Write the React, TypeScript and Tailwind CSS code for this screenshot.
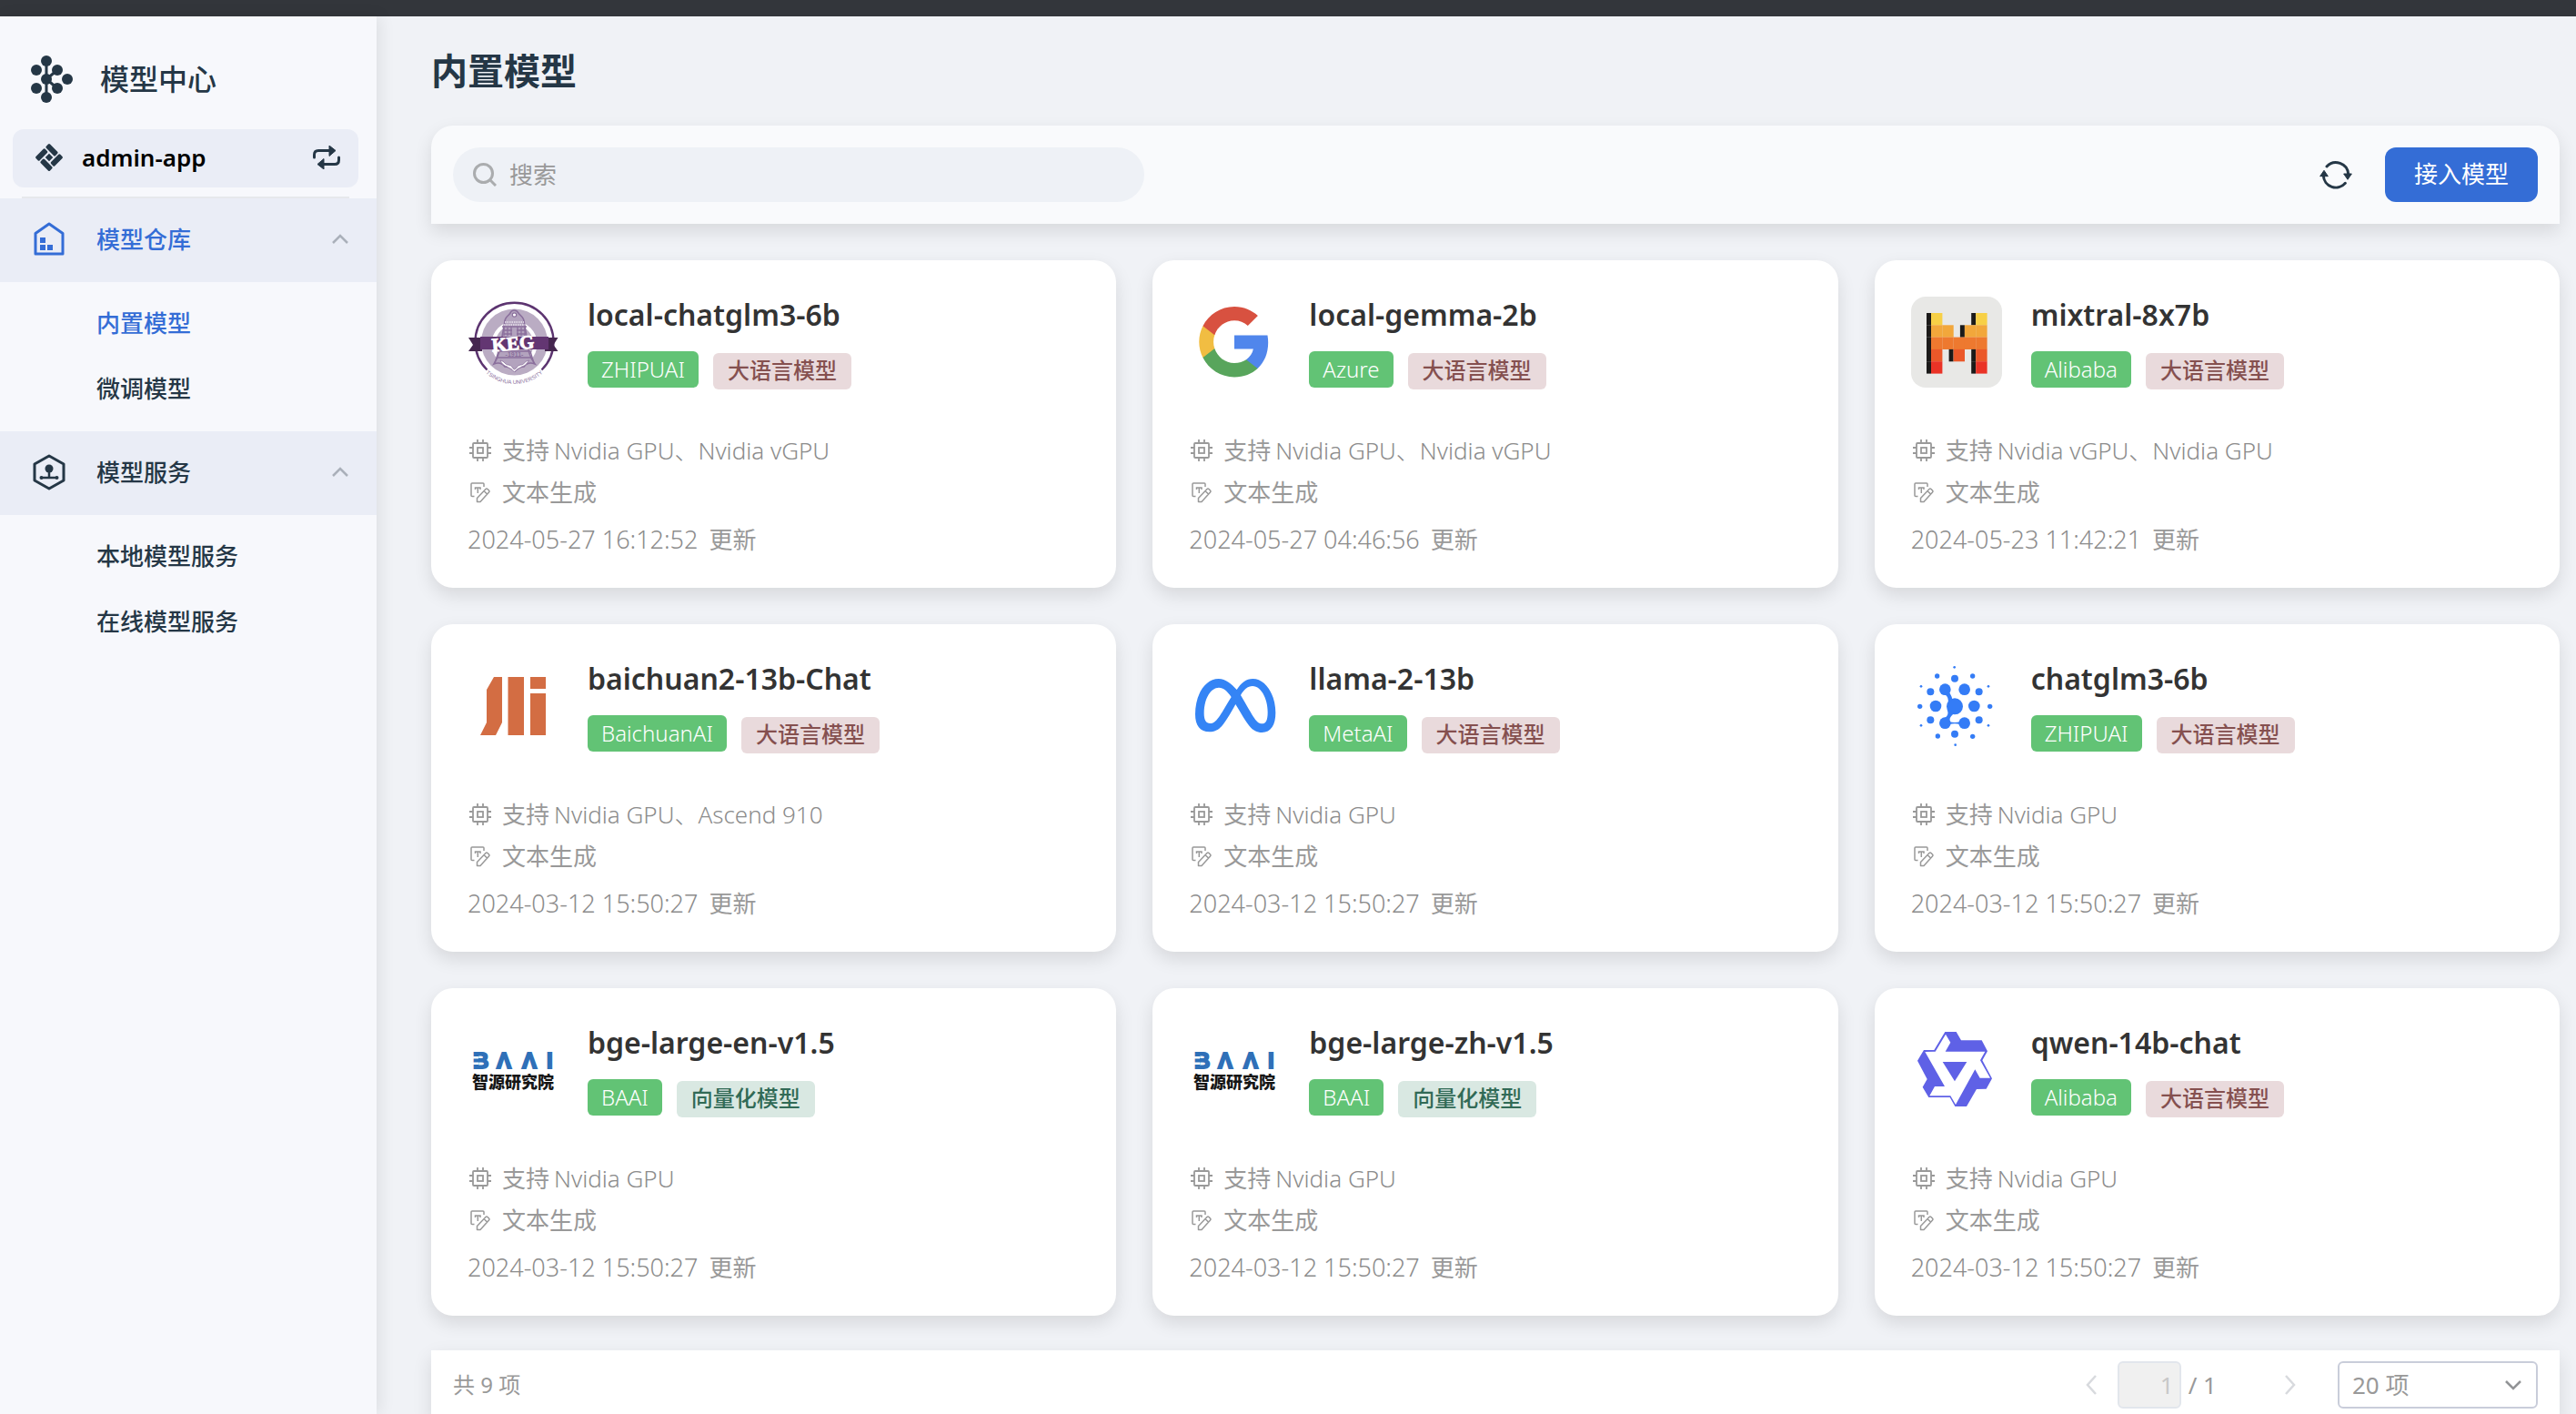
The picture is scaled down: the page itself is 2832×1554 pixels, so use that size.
import React from 'react';

type Kind = 'llm' | 'embedding';

interface Model {
  name: string;
  vendor: string;
  kind: Kind;
  hardware: string;
  updated: string;
  Logo: () => React.ReactElement;
}

/* ---------- brand marks ---------- */

function KegLogo() {
  return (
    <svg viewBox="0 0 100 100" className="size-[100px]" role="img" aria-label="KEG">
      <circle cx="51.5" cy="50" r="36.5" fill="#baacc3" />
      <circle cx="51.5" cy="52" r="23" fill="none" stroke="#fff" strokeWidth="4" />
      <path d="M41 27c0-4 4-6 6-9 1-3 6-5 9 0 2 3 6 5 6 9l3 17c1 14 3 22 9 30-5-2-9-1-12 3-3 0-6 1-10 5-5-4-8-5-11-5-3-4-7-5-12-3 5-8 8-16 9-30z" fill="#b3a3be" stroke="#8a6f9c" strokeWidth="1.6" />
      <circle cx="51.5" cy="20" r="2.2" fill="#fff" stroke="#8a6f9c" strokeWidth="1.2" />
      <path d="M41 28h21M40 31h23" stroke="#eae4ee" strokeWidth="1.4" strokeDasharray="1.5 1" />
      <path d="M40 34v9M44 34v9M48 33v10M40 37h9M40 41h9M54 37h10M54 41h10M55 33v10M59 34v9M63 34v9M38 33h27" stroke="#8a6f9c" strokeWidth="1.3" />
      <path d="M35 60h34M33 67h38M34 60l-4 13M69 60l4 13" stroke="#8a6f9c" strokeWidth="1.3" fill="none" />
      <path d="M36 70c5 1 5 5 9 5s4 4 6.500 5c3-1 3-5 7-5s4-4 9-5c-3 5-5 6-8 7-3 2-5 2-8 6-3-4-5-4-8-6-3-1-6-3-7.500-7z" fill="#fff" stroke="#8a6f9c" strokeWidth="0.800" />
      <text x="51.5" y="66" textAnchor="middle" fontSize="7" fontWeight="700" fontFamily="Liberation Sans" fill="#8a6f9c">-1911-</text>
      <path d="M21.500 80.500a43 43 0 1 1 60 0" fill="none" stroke="#5c3470" strokeWidth="2.400" />
      <path d="M1 45h15v15H1l5-7zM99.500 45H85v15h14.500l-5-7z" fill="#45264f" />
      <path d="M14 44h75v14H14z" fill="#633672" />
      <text x="50" y="58.500" textAnchor="middle" fontSize="21" fontWeight="700" fontFamily="Liberation Serif" fill="#fff" stroke="#fff" strokeWidth="0.900" transform="rotate(-5 50 52)">KEG</text>
      <path id="keg-arc" d="M19 83a47 47 0 0 0 65 0" fill="none" />
      <text fontSize="6" fontFamily="Liberation Sans" fill="#8a6f9c">
        <textPath href="#keg-arc" startOffset="50%" textAnchor="middle">TSINGHUA UNIVERSITY</textPath>
      </text>
    </svg>
  );
}

function GoogleLogo() {
  return (
    <svg viewBox="-2.200 -2.100 28.400 28.400" className="size-[100px]" role="img" aria-label="Google">
      <path fill="#5086ec" d="M22.560 12.250c0-.780-.070-1.530-.200-2.250H12v4.260h5.920c-.260 1.370-1.040 2.530-2.210 3.310v2.770h3.570c2.080-1.920 3.280-4.740 3.280-8.090z" />
      <path fill="#58a55c" d="M12 23c2.970 0 5.460-.980 7.280-2.660l-3.570-2.770c-.980.660-2.230 1.060-3.710 1.060-2.860 0-5.290-1.930-6.160-4.530H2.180v2.840C3.990 20.530 7.700 23 12 23z" />
      <path fill="#f1bd42" d="M5.840 14.090c-.220-.660-.350-1.360-.350-2.090s.130-1.430.350-2.090V7.070H2.180C1.430 8.550 1 10.220 1 12s.430 3.450 1.180 4.930l2.850-2.220.810-.620z" />
      <path fill="#d85140" d="M12 5.380c1.620 0 3.060.560 4.210 1.640l3.150-3.150C17.450 2.090 14.970 1 12 1 7.700 1 3.990 3.470 2.180 7.070l3.660 2.840c.870-2.600 3.300-4.530 6.160-4.530z" />
    </svg>
  );
}

const MISTRAL_ROWS: { color: string; cells: number[]; shade: number[] }[] = [
  { color: '#f7d046', cells: [0, 4], shade: [0, 4] },
  { color: '#f2a73b', cells: [0, 1, 3, 4], shade: [0, 3] },
  { color: '#ee792f', cells: [0, 1, 2, 3, 4], shade: [0] },
  { color: '#eb5829', cells: [0, 2, 4], shade: [0, 2, 4] },
  { color: '#ea3326', cells: [0, 4], shade: [0, 4] },
];

function MistralLogo() {
  return (
    <svg viewBox="0 0 100 100" className="size-[100px]" role="img" aria-label="Mistral">
      <rect width="100" height="100" rx="16" fill="#e8e8e6" />
      {MISTRAL_ROWS.map((row, r) => (
        <g key={row.color}>
          {row.shade.map((c) => (
            <rect key={c} x={17 + c * 12.3} y={18 + r * 13.3} width="5" height="13.400" fill="#1b1a19" />
          ))}
          {row.cells.map((c) => (
            <rect key={c} x={22 + c * 12.3} y={18 + r * 13.3} width="12.400" height="13.400" fill={row.color} />
          ))}
        </g>
      ))}
    </svg>
  );
}

function BaichuanLogo() {
  return (
    <svg viewBox="0 0 100 100" className="size-[100px]" fill="#d36d43" role="img" aria-label="Baichuan">
      <path d="M29 18h9v50l-7 14H14l7-14V32zM44.500 18H62v64H44.500zM69 18h17v13H69zM69 36h17v46H69z" />
    </svg>
  );
}

function MetaLogo() {
  return (
    <svg viewBox="81 78 300 300" className="size-[100px]" fill="#3484f5" role="img" aria-label="Meta">
      <path
        fillRule="evenodd"
        d="M102 255C102 190 135 138 179 138C203 138 222 156 239 174C253 152 270 138 292 138C335 138 367 192 367 250C367 290 352 315 322 315C288 315 276 290 235 222C196 292 182 313 149 313C118 313 102 292 102 255ZM131 252C131 274 138 285 151 285C172 285 182 262 221 198C210 182 198 167 180 167C155 167 131 200 131 252ZM252 192C296 267 304 286 322 286C335 286 341 275 341 248C341 205 320 162 291 162C275 162 262 174 252 192Z"
      />
    </svg>
  );
}

const GLM_DOTS: [number, number, number][] = [
  [177, 229, 27], [145, 173, 19], [209, 173, 19], [114, 228, 19], [241, 228, 19], [145, 284, 19], [209, 284, 19],
  [177, 137, 12], [177, 320, 12], [97, 181, 12], [257, 181, 12], [97, 274, 12], [257, 274, 12],
  [119, 129, 8], [236, 129, 8], [62, 229, 8], [293, 229, 8], [121, 327, 8], [236, 328, 8],
  [176, 100, 4], [66, 163, 4], [288, 163, 4], [66, 292, 4], [288, 292, 4], [179, 356, 4],
];

function GlmLogo() {
  return (
    <svg viewBox="33 78 300 300" className="size-[100px]" fill="#347cf6" role="img" aria-label="ChatGLM">
      {GLM_DOTS.map(([x, y, r]) => (
        <circle key={`${x}-${y}`} cx={x} cy={y} r={r} />
      ))}
      <path d="M140 188Q158 194 155 215L168 208Q170 200 160 184zM152 240Q160 258 142 268L160 274Q162 260 176 252zM160 280Q177 284 194 280V288Q177 284 160 288z" />
    </svg>
  );
}

function BaaiLogo() {
  return (
    <svg viewBox="0 0 100 100" className="size-[100px]" role="img" aria-label="BAAI 智源研究院">
      <text x="6 32 60 87" y="48" fontSize="24" fontWeight="700" fontFamily="Liberation Sans" fill="#2f70b8" stroke="#2f70b8" strokeWidth="2">BΛΛI</text>
      <path d="M5 35h7v2.500H5zM5 41.500h7V44H5z" fill="#fff" />
      <text x="5" y="70" fontSize="18" fontWeight="900" fontFamily="Noto Sans CJK SC" fill="#161616">智源研究院</text>
    </svg>
  );
}

function QwenLogo() {
  return (
    <svg viewBox="33 48 300 300" className="size-[100px]" role="img" aria-label="Qwen">
      <path fill="#5f61e6" d="M145 72h37l16 28h68l19 36-17 30 32 60-19 34-32 1-33 57h-38l-17-30H91l-20-34 15-26-32-61 21-35h34z" />
      <path fill="#fff" d="M147 80l16 27-17 30h131l-16 29 33 58h-34l-16-28-64 116-17-29H94l17-31h33L79 138l34-1z" />
      <path fill="#5f61e6" d="M137 171h80l-40 64z" />
    </svg>
  );
}

/* ---------- interface icons ---------- */

function HubIcon() {
  const nodes: [number, number][] = [[17, 6], [6, 16], [29, 16], [17, 26], [40, 26], [6, 36], [29, 36], [17, 46]];
  return (
    <svg viewBox="0 0 46 52" className="h-[52px] w-[46px]" fill="#253746" aria-hidden="true">
      {nodes.map(([x, y]) => (
        <circle key={`${x}-${y}`} cx={x} cy={y} r="6" />
      ))}
      <path d="M17 6v40M29 16l-12 10 12 10" fill="none" stroke="#253746" strokeWidth="3" />
    </svg>
  );
}

function AppIcon() {
  return (
    <svg viewBox="0 0 32 32" className="size-8" fill="#253746" aria-hidden="true">
      <g transform="rotate(-45 16 16) translate(5 5)">
        <rect x="0" y="0" width="14.500" height="6" rx="1.500" />
        <rect x="16" y="0" width="6" height="14.500" rx="1.500" />
        <rect x="7.500" y="16" width="14.500" height="6" rx="1.500" />
        <rect x="0" y="7.500" width="6" height="14.500" rx="1.500" />
        <rect x="8" y="8" width="6" height="6" />
      </g>
    </svg>
  );
}

function SwapIcon() {
  return (
    <svg viewBox="0 0 30 26" className="h-[26px] w-[30px]" fill="#253746" aria-hidden="true">
      <path d="M1.500 13v-3q0-4.500 4.500-4.500h13M28.500 13v3q0 4.500-4.500 4.500H11" fill="none" stroke="#253746" strokeWidth="3" strokeLinecap="round" />
      <path d="M18 0l7 5.500-7 6zM12 26l-7-5.500 7-6z" strokeLinejoin="round" stroke="#253746" />
    </svg>
  );
}

function WarehouseIcon() {
  return (
    <svg viewBox="0 0 34 38" className="h-[38px] w-[34px]" aria-hidden="true">
      <path d="M2 12.500L17 2l15 10.500V35H2z" fill="none" stroke="#346dd6" strokeWidth="3" strokeLinejoin="round" />
      <path d="M7 17h6v6H7zM7 25h6v6H7zM15 25h6v6h-6z" fill="#346dd6" />
    </svg>
  );
}

function ServiceIcon() {
  return (
    <svg viewBox="0 0 36 40" className="h-10 w-9" aria-hidden="true">
      <path d="M18 2l16 9v18l-16 9-16-9V11z" fill="none" stroke="#253746" strokeWidth="3" strokeLinejoin="round" />
      <circle cx="18" cy="16" r="4.500" fill="#253746" />
      <path d="M18 18v8M9 26h18" stroke="#253746" strokeWidth="2.500" />
      <circle cx="9.500" cy="26" r="2" fill="#253746" />
      <circle cx="26.500" cy="26" r="2" fill="#253746" />
    </svg>
  );
}

function RefreshIcon() {
  return (
    <svg viewBox="450 174 108 96" className="h-8 w-9" fill="#253746" aria-hidden="true">
      <path d="M474 195a41 41 0 0 1 71 25M463 225a41 41 0 0 0 72 25" fill="none" stroke="#253746" strokeWidth="9" strokeLinecap="round" />
      <path d="M530 219h26l-13 19zM452 227h26l-13-19z" stroke="#253746" strokeWidth="3" strokeLinejoin="round" />
    </svg>
  );
}

function SearchIcon() {
  return (
    <svg viewBox="0 0 26 26" className="size-[26px]" fill="none" stroke="#aaacae" strokeWidth="3" aria-hidden="true">
      <circle cx="11.500" cy="11.500" r="10" />
      <path d="M18.500 18.500L25 25" />
    </svg>
  );
}

function ChipIcon() {
  return (
    <svg viewBox="0 0 24 24" className="size-6 shrink-0" fill="none" stroke="#999" strokeWidth="1.800" aria-hidden="true">
      <rect x="4" y="4" width="16" height="16" rx="1" />
      <rect x="9" y="9" width="6" height="6" />
      <path d="M9 0v4M15 0v4M9 20v4M15 20v4M0 9h4M0 15h4M20 9h4M20 15h4" />
    </svg>
  );
}

function TextEditIcon() {
  return (
    <svg viewBox="0 0 24 24" className="size-6 shrink-0" fill="none" stroke="#999" strokeWidth="1.500" aria-hidden="true">
      <path d="M5.500 16.500H3q-1 0-1-1V3q0-1 1-1h12q1 0 1 1v3" />
      <path d="M6.500 9V7H12v2M9.300 7v6" />
      <path d="M8.500 18.500L18 8.500q1-1 2 0l1.500 1.500q1 1 0 2l-9.500 10.500H8.500zM16 10.500l3.500 3.500" strokeLinejoin="round" />
    </svg>
  );
}

function Chevron({ dir, className }: { dir: 'up' | 'down' | 'left' | 'right'; className: string }) {
  const shapes = { up: 'M1 10l8-8 8 8', down: 'M1 2l8 8 8-8', left: 'M11 1L2 11l9 10', right: 'M2 1l9 10-9 10' };
  const box = dir === 'up' || dir === 'down' ? '0 0 18 12' : '0 0 13 22';
  return (
    <svg viewBox={box} className={className} fill="none" stroke="currentColor" strokeWidth="2.500" aria-hidden="true">
      <path d={shapes[dir]} />
    </svg>
  );
}

/* ---------- data ---------- */

const MODELS: Model[] = [
  { name: 'local-chatglm3-6b', vendor: 'ZHIPUAI', kind: 'llm', hardware: 'Nvidia GPU、Nvidia vGPU', updated: '2024-05-27 16:12:52', Logo: KegLogo },
  { name: 'local-gemma-2b', vendor: 'Azure', kind: 'llm', hardware: 'Nvidia GPU、Nvidia vGPU', updated: '2024-05-27 04:46:56', Logo: GoogleLogo },
  { name: 'mixtral-8x7b', vendor: 'Alibaba', kind: 'llm', hardware: 'Nvidia vGPU、Nvidia GPU', updated: '2024-05-23 11:42:21', Logo: MistralLogo },
  { name: 'baichuan2-13b-Chat', vendor: 'BaichuanAI', kind: 'llm', hardware: 'Nvidia GPU、Ascend 910', updated: '2024-03-12 15:50:27', Logo: BaichuanLogo },
  { name: 'llama-2-13b', vendor: 'MetaAI', kind: 'llm', hardware: 'Nvidia GPU', updated: '2024-03-12 15:50:27', Logo: MetaLogo },
  { name: 'chatglm3-6b', vendor: 'ZHIPUAI', kind: 'llm', hardware: 'Nvidia GPU', updated: '2024-03-12 15:50:27', Logo: GlmLogo },
  { name: 'bge-large-en-v1.5', vendor: 'BAAI', kind: 'embedding', hardware: 'Nvidia GPU', updated: '2024-03-12 15:50:27', Logo: BaaiLogo },
  { name: 'bge-large-zh-v1.5', vendor: 'BAAI', kind: 'embedding', hardware: 'Nvidia GPU', updated: '2024-03-12 15:50:27', Logo: BaaiLogo },
  { name: 'qwen-14b-chat', vendor: 'Alibaba', kind: 'llm', hardware: 'Nvidia GPU', updated: '2024-03-12 15:50:27', Logo: QwenLogo },
];

const KIND_LABEL: Record<Kind, string> = { llm: '大语言模型', embedding: '向量化模型' };
const KIND_CLASS: Record<Kind, string> = {
  llm: 'bg-[#e9dadc] text-[#85504f]',
  embedding: 'bg-[#d9e8e2] text-[#316a56]',
};

/* ---------- layout pieces ---------- */

function NavGroup({ icon, label, active, items }: { icon: React.ReactNode; label: string; active?: boolean; items: { label: string; active?: boolean }[] }) {
  return (
    <section>
      <button type="button" aria-expanded="true" className={`flex h-[92px] w-full items-center bg-[#eaedf6] pr-[31px] pb-[2px] pl-9 ${active ? 'text-[#346dd6]' : 'text-[#253746]'}`}>
        <span className="flex w-9 justify-center">{icon}</span>
        <span className="ml-[34px] flex-1 text-left font-medium">{label}</span>
        <Chevron dir="up" className="h-3 w-[18px] text-[#aab0ba]" />
      </button>
      <ul className="py-[10px]">
        {items.map((item) => (
          <li key={item.label}>
            <a href="#" className={`flex h-[72px] items-center pb-[2px] pl-[106px] font-medium ${item.active ? 'text-[#346dd6]' : 'text-[#253746]'}`}>
              {item.label}
            </a>
          </li>
        ))}
      </ul>
    </section>
  );
}

function Sidebar() {
  return (
    <aside className="z-10 w-[414px] shrink-0 bg-[#f7f8fc] text-[26px] shadow-[4px_0_16px_rgba(0,0,0,0.08)]">
      <div className="flex h-[124px] items-center gap-[30px] pt-[14px] pl-[34px] text-[#253746]">
        <HubIcon />
        <span className="text-[32px] font-medium">模型中心</span>
      </div>
      <button type="button" className="mr-5 ml-[14px] flex h-16 w-[380px] items-center rounded-[12px] bg-[#eaedf6] pr-5 pb-[2px] pl-6">
        <AppIcon />
        <span className="ml-5 flex-1 text-left font-semibold text-black">admin-app</span>
        <SwapIcon />
      </button>
      <hr className="mt-[10px] mr-[30px] ml-6 border-t-2 border-[#e6e8ec]" />
      <nav>
        <NavGroup active icon={<WarehouseIcon />} label="模型仓库" items={[{ label: '内置模型', active: true }, { label: '微调模型' }]} />
        <NavGroup icon={<ServiceIcon />} label="模型服务" items={[{ label: '本地模型服务' }, { label: '在线模型服务' }]} />
      </nav>
    </aside>
  );
}

function Toolbar() {
  return (
    <div className="flex items-center rounded-t-[24px] bg-[#f9fafc] p-6 shadow-[0_8px_20px_rgba(0,0,0,0.11)]">
      <label className="flex h-[60px] w-full max-w-[760px] items-center gap-[14px] rounded-full bg-[#eef1f6] px-[22px]">
        <SearchIcon />
        <input type="search" aria-label="搜索" placeholder="搜索" className="min-w-0 flex-1 bg-transparent text-[26px] outline-none placeholder:text-[#999]" />
      </label>
      <button type="button" aria-label="刷新" className="ml-auto">
        <RefreshIcon />
      </button>
      <button type="button" className="ml-9 h-[60px] w-[168px] rounded-[12px] bg-[#346dd6] pb-[2px] text-[26px] text-white">接入模型</button>
    </div>
  );
}

function ModelCard({ model }: { model: Model }) {
  const { Logo } = model;
  return (
    <article className="rounded-[24px] bg-white px-10 pt-10 pb-[30px] text-[26px] text-[#999] shadow-[0_8px_20px_rgba(0,0,0,0.11)]">
      <header className="flex gap-8">
        <Logo />
        <div>
          <h2 className="text-[32px] leading-10 font-semibold text-[#333]">{model.name}</h2>
          <div className="mt-5 flex h-[42px] gap-4 text-2xl">
            <span className="flex h-10 items-center self-start rounded-[6px] bg-[#62c375] px-[15px] font-light text-white">{model.vendor}</span>
            <span className={`flex h-10 items-center self-end rounded-[6px] px-4 pb-[2px] font-medium ${KIND_CLASS[model.kind]}`}>{KIND_LABEL[model.kind]}</span>
          </div>
        </div>
      </header>
      <ul className="mt-11">
        <li className="flex h-[46px] items-center pl-[2px]">
          <ChipIcon />
          <span className="ml-3">支持</span>
          <span className="ml-[5px] font-light text-[#8c8c8c]">{model.hardware}</span>
        </li>
        <li className="flex h-[46px] items-center pl-[2px]">
          <TextEditIcon />
          <span className="ml-3">文本生成</span>
        </li>
      </ul>
      <p className="mt-[6px] flex h-[46px] items-center gap-3">
        <time className="text-[27px] font-light text-[#8c8c8c]">{model.updated}</time>
        <span>更新</span>
      </p>
    </article>
  );
}

function Pagination() {
  return (
    <footer className="mt-[38px] flex h-[76px] items-center bg-white px-6 text-[26px] text-[#999] shadow-[0_8px_20px_rgba(0,0,0,0.11)]">
      <span className="text-2xl">共 9 项</span>
      <button type="button" aria-label="上一页" disabled className="ml-auto text-[#d8dade]">
        <Chevron dir="left" className="h-[22px] w-[13px]" />
      </button>
      <input aria-label="页码" disabled defaultValue="1" className="ml-[22px] h-[52px] w-[70px] rounded-[6px] border-2 border-[#e2e6ec] bg-[#f0f0f0] px-[6px] text-right text-[#c8c8c8]" />
      <span className="ml-2">/ 1</span>
      <button type="button" aria-label="下一页" disabled className="ml-[74px] text-[#d8dade]">
        <Chevron dir="right" className="h-[22px] w-[13px]" />
      </button>
      <div className="relative ml-[46px]">
        <select aria-label="每页条数" className="h-[52px] w-[220px] appearance-none rounded-[6px] border-2 border-[#c9cdda] bg-white px-[14px] outline-none">
          <option>20 项</option>
        </select>
        <Chevron dir="down" className="pointer-events-none absolute top-5 right-[18px] h-3 w-[18px] text-[#929496]" />
      </div>
    </footer>
  );
}

export default function App() {
  return (
    <div className="flex h-screen flex-col overflow-hidden bg-[#f0f2f6] font-['Noto_Sans','Noto_Sans_CJK_SC',sans-serif]">
      <div className="h-[18px] shrink-0 bg-[#33363b]" />
      <div className="flex min-h-0 flex-1">
        <Sidebar />
        <main className="min-w-0 flex-1 overflow-hidden pr-[18px] pl-[60px]">
          <h1 className="flex h-[120px] items-center text-[40px] font-semibold text-[#253746]">内置模型</h1>
          <Toolbar />
          <div className="mt-10 grid grid-cols-3 gap-10">
            {MODELS.map((model) => (
              <ModelCard key={model.name} model={model} />
            ))}
          </div>
          <Pagination />
        </main>
      </div>
    </div>
  );
}
